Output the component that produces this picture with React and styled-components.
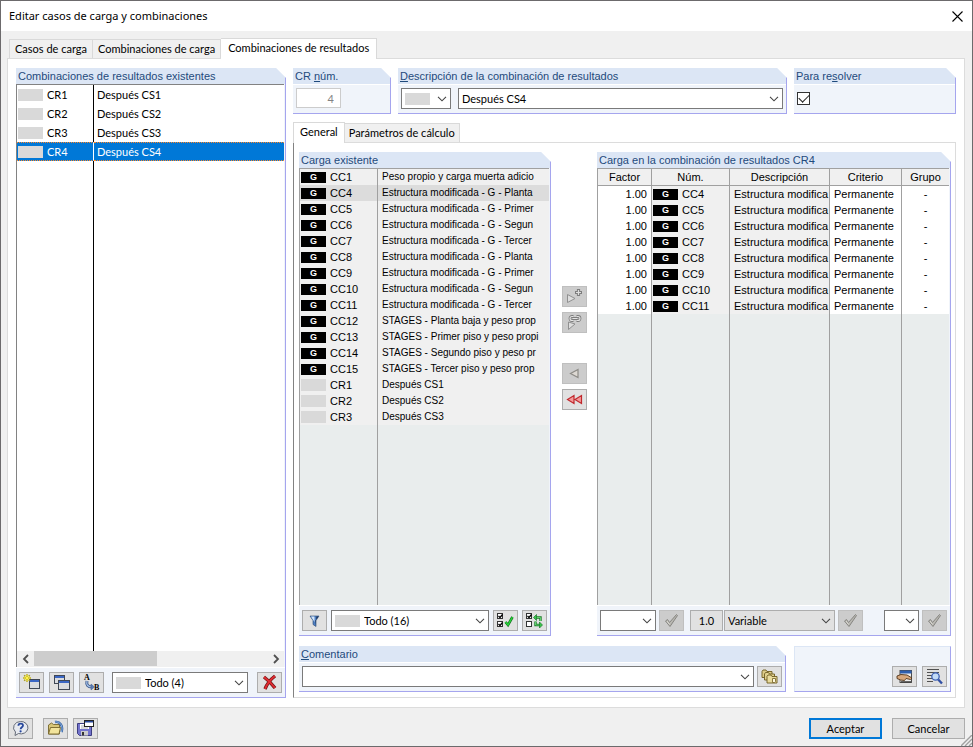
import React from 'react';
import styled, { createGlobalStyle, css } from 'styled-components';

const App = () => {
  return (
    <>
      <GlobalStyle />
      <StWindow>
        <StTitleBar>
          <StTitle>Editar casos de carga y combinaciones</StTitle>
          <StClose type='button' aria-label='Cerrar'>
            <svg width='11' height='11' viewBox='0 0 11 11'>
              <path d='M.5.5l10 10M10.5.5l-10 10' stroke='#000' strokeWidth='1.1' />
            </svg>
          </StClose>
        </StTitleBar>

        <StTabs>
          <StTab type='button'>Casos de carga</StTab>
          <StTab type='button'>Combinaciones de carga</StTab>
          <StTab type='button' $active>
            Combinaciones de resultados
          </StTab>
        </StTabs>

        <StPage>
          <ResultCombinations />
          <StDetail>
            <StTopRow>
              <StGroup>
                <StLabel htmlFor='number'>
                  CR <u>n</u>úm.
                </StLabel>
                <StFields>
                  <StNumber id='number' defaultValue='4' disabled />
                </StFields>
              </StGroup>
              <StGroup>
                <StLabel htmlFor='description'>
                  <u>D</u>escripción de la combinación de resultados
                </StLabel>
                <StFields $gap='7px'>
                  <Combo width='50px' swatch label='Color' />
                  <Combo id='description' value='Después CS4' />
                </StFields>
              </StGroup>
              <StGroup>
                <StLabel htmlFor='solve'>
                  Para re<u>s</u>olver
                </StLabel>
                <StFields>
                  <StCheckbox id='solve' type='checkbox' defaultChecked />
                </StFields>
              </StGroup>
            </StTopRow>

            <StInnerTabs>
              <StTab type='button' $active>
                General
              </StTab>
              <StTab type='button'>Parámetros de cálculo</StTab>
            </StInnerTabs>

            <StInnerPage>
              <StTransfer>
                <ExistingLoads />
                <StMoveButtons>
                  <ToolButton icon='add' label='Añadir' disabled />
                  <ToolButton icon='addGroup' label='Añadir con grupo' disabled />
                  <StSpacer />
                  <ToolButton icon='remove' label='Quitar' disabled />
                  <ToolButton icon='removeAll' label='Quitar todo' />
                </StMoveButtons>
                <CombinationLoads />
              </StTransfer>

              <StBottomRow>
                <StGroup>
                  <StLabel htmlFor='comment'>
                    <u>C</u>omentario
                  </StLabel>
                  <StFields>
                    <Combo id='comment' />
                    <ToolButton icon='library' label='Comentarios' />
                  </StFields>
                </StGroup>
                <StActions>
                  <ToolButton icon='hand' label='Seleccionar' />
                  <ToolButton icon='search' label='Detalles' />
                </StActions>
              </StBottomRow>
            </StInnerPage>
          </StDetail>
        </StPage>

        <StFooter>
          <ToolButton icon='help' label='Ayuda' />
          <StGap />
          <ToolButton icon='open' label='Abrir' />
          <ToolButton icon='save' label='Guardar' />
          <StPush />
          <StButton type='button' $primary>
            Aceptar
          </StButton>
          <StButton type='button'>Cancelar</StButton>
          <StGrip width='11' height='11' viewBox='0 0 11 11'>
            <path d='M0 11L11 0M4 11l7-7M8 11l3-3' stroke='#a0a0a0' strokeWidth='1.4' />
          </StGrip>
        </StFooter>
      </StWindow>
    </>
  );
};

export default App;

const RESULTS = ['Después CS1', 'Después CS2', 'Después CS3', 'Después CS4'];

const LOADS = [
  ['CC1', 'Peso propio y carga muerta adicio'],
  ['CC4', 'Estructura modificada - G - Planta'],
  ['CC5', 'Estructura modificada - G - Primer'],
  ['CC6', 'Estructura modificada - G - Segun'],
  ['CC7', 'Estructura modificada - G - Tercer'],
  ['CC8', 'Estructura modificada - G - Planta'],
  ['CC9', 'Estructura modificada - G - Primer'],
  ['CC10', 'Estructura modificada - G - Segun'],
  ['CC11', 'Estructura modificada - G - Tercer'],
  ['CC12', 'STAGES - Planta baja y peso prop'],
  ['CC13', 'STAGES - Primer piso y peso propi'],
  ['CC14', 'STAGES - Segundo piso y peso pr'],
  ['CC15', 'STAGES - Tercer piso y peso prop'],
  ['CR1', 'Después CS1'],
  ['CR2', 'Después CS2'],
  ['CR3', 'Después CS3'],
];

const COMBINED = ['CC4', 'CC5', 'CC6', 'CC7', 'CC8', 'CC9', 'CC10', 'CC11'];

const ResultCombinations = () => (
  <StGroup>
    <StHeading>Combinaciones de resultados existentes</StHeading>
    <StList>
      <StResultTable>
        <colgroup>
          <StCol $width='77px' />
          <StCol />
        </colgroup>
        <tbody>
          {RESULTS.map((name, i) => (
            <StResultRow key={name} $selected={i === 3}>
              <td>
                <StCode>
                  <StSwatch />
                  CR{i + 1}
                </StCode>
              </td>
              <td>{name}</td>
            </StResultRow>
          ))}
          <StFiller>
            <td />
            <td />
          </StFiller>
        </tbody>
      </StResultTable>
    </StList>
    <StScrollbar>
      <Arrow d='M6 1L2 5l4 4' />
      <StTrack>
        <StThumb />
      </StTrack>
      <Arrow d='M2 1l4 4-4 4' />
    </StScrollbar>
    <StToolbar $gap='5px'>
      <ToolButton icon='new' label='Nuevo' />
      <ToolButton icon='copy' label='Copiar' />
      <ToolButton icon='renumber' label='Renumerar' />
      <StFilter>
        <Combo value='Todo (4)' swatch label='Filtro' />
      </StFilter>
      <ToolButton icon='delete' label='Eliminar' />
    </StToolbar>
  </StGroup>
);

const ExistingLoads = () => (
  <StGroup>
    <StHeading>Carga existente</StHeading>
    <StGrid>
      <StLoadTable>
        <colgroup>
          <StCol $width='78px' />
          <StCol />
        </colgroup>
        <tbody>
          {LOADS.map(([code, name], i) => (
            <StLoadRow key={code} $selected={i === 1}>
              <td>
                <StCode>
                  {code.startsWith('CC') ? <StBadge>G</StBadge> : <StSwatch />}
                  {code}
                </StCode>
              </td>
              <StNameCell>{name}</StNameCell>
            </StLoadRow>
          ))}
          <StFiller>
            <td />
            <td />
          </StFiller>
        </tbody>
      </StLoadTable>
    </StGrid>
    <StToolbar $gap='4px'>
      <ToolButton icon='filter' label='Filtrar' />
      <Combo value='Todo (16)' swatch label='Tipo de carga' />
      <ToolButton icon='checkAll' label='Seleccionar todo' />
      <ToolButton icon='invert' label='Invertir selección' />
    </StToolbar>
  </StGroup>
);

const CombinationLoads = () => (
  <StGroup>
    <StHeading>Carga en la combinación de resultados CR4</StHeading>
    <StGrid>
      <StLoadTable>
        <colgroup>
          <StCol $width='54px' />
          <StCol $width='78px' />
          <StCol />
          <StCol $width='72px' />
          <StCol $width='47px' />
        </colgroup>
        <thead>
          <tr>
            <th>Factor</th>
            <th>Núm.</th>
            <th>Descripción</th>
            <th>Criterio</th>
            <th>Grupo</th>
          </tr>
        </thead>
        <tbody>
          {COMBINED.map((code) => (
            <StLoadRow key={code}>
              <StEditCell $align='right'>1.00</StEditCell>
              <td>
                <StCode>
                  <StBadge>G</StBadge>
                  {code}
                </StCode>
              </td>
              <td>Estructura modifica</td>
              <StEditCell>Permanente</StEditCell>
              <StEditCell $align='center'>-</StEditCell>
            </StLoadRow>
          ))}
          <StFiller>
            <td />
            <td />
            <td />
            <td />
            <td />
          </StFiller>
        </tbody>
      </StLoadTable>
    </StGrid>
    <StToolbar $gap='3px'>
      <Combo width='56px' label='Factor' />
      <ToolButton icon='apply' label='Aplicar factor' disabled />
      <StGap />
      <StPair>
        <StFactor type='button'>1.0</StFactor>
        <Combo value='Variable' flat label='Criterio' />
      </StPair>
      <ToolButton icon='apply' label='Aplicar criterio' disabled />
      <StGap $width='15px' />
      <Combo width='35px' label='Grupo' />
      <ToolButton icon='apply' label='Aplicar grupo' disabled />
    </StToolbar>
  </StGroup>
);

const Combo = ({ id, label, value = '', width, swatch, flat }) => (
  <StCombo $width={width} $flat={flat}>
    {swatch && <StSwatch />}
    <StSelect id={id} aria-label={label} $indent={swatch}>
      <option>{value}</option>
    </StSelect>
    <StChevron width='10' height='6' viewBox='0 0 10 6'>
      <path d='M1 .8l4 4 4-4' fill='none' stroke='#444' strokeWidth='1.1' />
    </StChevron>
  </StCombo>
);

const Arrow = ({ d }) => (
  <StArrow type='button' aria-label='Desplazar'>
    <svg width='8' height='10' viewBox='0 0 8 10'>
      <path d={d} fill='none' stroke='#505050' strokeWidth='1.8' />
    </svg>
  </StArrow>
);

const ToolButton = ({ icon, label, disabled }) => (
  <StToolButton type='button' aria-label={label} disabled={disabled}>
    <svg width='17' height='17' viewBox='0 0 17 17'>
      {icons[icon]}
    </svg>
  </StToolButton>
);

const smallWindow = (x, y, w, h) => (
  <g>
    <rect x={x + 0.5} y={y + 0.5} width={w} height={h} fill='#d9dbdf' stroke='#3f4754' />
    <rect x={x + 1} y={y + 1} width={w - 1} height='2' fill='#3a66c4' />
  </g>
);

const tinyCheck = (y, ticked) => (
  <g>
    <rect x='.5' y={y + 0.5} width='5' height='5' fill='#fff' stroke='#333' />
    {ticked && <path d={`M1.5 ${y + 3}l1.5 1.5 2.5-3`} fill='none' stroke='#000' strokeWidth='1.3' />}
  </g>
);

const icons = {
  new: (
    <>
      {smallWindow(6, 5, 10, 9)}
      <path d='M4 0v8M0 4h8M1.2 1.2l5.6 5.6M6.8 1.2L1.2 6.8' stroke='#a99a1c' strokeWidth='1.4' />
      <path d='M4 .5v7M.5 4h7M2 2l4 4M6 2L2 6' stroke='#fff34a' strokeWidth='1' />
    </>
  ),
  copy: (
    <>
      {smallWindow(1, 1, 10, 8)}
      {smallWindow(5, 6, 11, 9)}
    </>
  ),
  renumber: (
    <>
      <path d='M4 7c-1 4 1 6 5 6' fill='none' stroke='#3c5a8c' strokeWidth='3' />
      <path d='M4 7c-1 4 1 6 5 6' fill='none' stroke='#a9c4ea' strokeWidth='1.2' />
      <path d='M8 10l3.5 3L8 16z' fill='#5c7fb8' stroke='#3c5a8c' strokeWidth='.5' />
      <text x='1' y='6' fontSize='8' fontWeight='700' fontFamily='Liberation Serif, serif'>
        A
      </text>
      <text x='11' y='16' fontSize='8' fontWeight='700' fontFamily='Liberation Serif, serif'>
        B
      </text>
    </>
  ),
  delete: (
    <>
      <path d='M3 3c4 3 8 7 11 11M14 2C10 5 6 10 4 15' fill='none' stroke='#6d1515' strokeWidth='3.4' />
      <path d='M3 3c4 3 8 7 11 11M14 2C10 5 6 10 4 15' fill='none' stroke='#e02b30' strokeWidth='2' />
    </>
  ),
  add: (
    <>
      <path d='M1.5 6.5l7.500 4-7.500 4z' fill='#dedede' stroke='#909090' />
      <path d='M12.500 1v7M9 4.500h7' stroke='#7d7d7d' strokeWidth='3.2' />
      <path d='M12.500 2v5M10 4.500h5' stroke='#ddd' strokeWidth='1.2' />
    </>
  ),
  addGroup: (
    <>
      <path d='M2.5 8l6.500 2-6.500 5.500z' fill='#dedede' stroke='#909090' />
      <path d='M7.500 2.500H6a2 2 0 000 4h1.500M10.500 2.500H12a2 2 0 010 4h-1.500M6.500 4.500h5' fill='none' stroke='#7d7d7d' strokeWidth='2.8' />
      <path d='M7.500 2.500H6a2 2 0 000 4h1.500M10.500 2.500H12a2 2 0 010 4h-1.500M6.500 4.500h5' fill='none' stroke='#e4e4e4' strokeWidth='1.1' />
    </>
  ),
  remove: <path d='M12 4.500v8L4.500 8.500z' fill='#ddd9d3' stroke='#8d8b86' strokeWidth='1.2' />,
  removeAll: <path d='M8 4.500v8L1.500 8.500zM15.500 4.500v8L9 8.500z' fill='#f59a9a' stroke='#c0282d' strokeWidth='1.2' />,
  filter: (
    <>
      <path d='M4 4h9L10 8.500v6l-3-2v-4z' fill='#4f80c4' stroke='#29466f' strokeWidth='.6' />
      <path d='M5 4.500h3.500V10z' fill='#d4e6fb' />
      <path d='M10.500 4.500h2l-3 4v5z' fill='#16294a' />
    </>
  ),
  checkAll: (
    <>
      {tinyCheck(1, true)}
      {tinyCheck(9, true)}
      <path d='M8.500 10l2.500 3 4.500-8' fill='none' stroke='#14651c' strokeWidth='2.6' />
      <path d='M8.500 10l2.500 3 4.500-8' fill='none' stroke='#27d43a' strokeWidth='1.5' />
    </>
  ),
  invert: (
    <>
      {tinyCheck(1, true)}
      {tinyCheck(9, false)}
      <path d='M10 5.500h4.500V9M14 13H9.500V9.500' fill='none' stroke='#1d7a2a' strokeWidth='2.4' />
      <path d='M10 5.500h4.500V9M14 13H9.500V9.500' fill='none' stroke='#5fd06d' strokeWidth='1' />
      <path d='M10.500 2.500v6l-3-3zM13.500 10v6l3-3z' fill='#39c44c' stroke='#1d7a2a' strokeWidth='.7' />
    </>
  ),
  apply: (
    <>
      <path d='M2.500 9l2-1.500 2 3L13.500 2.500l1 1L7 14.500z' fill='#b9b8b2' stroke='#868581' strokeWidth='1' />
      <path d='M4 9l2.500 3.500' stroke='#dddcd6' />
    </>
  ),
  library: (
    <>
      <path d='M1 3.500l1-1.500h3l1 1.500h5v6H1z' fill='#dcca87' stroke='#6e5b20' strokeWidth='.9' />
      <path d='M3.500 6l1-1.500h3l1 1.500h5v6h-10z' fill='#e2d290' stroke='#6e5b20' strokeWidth='.9' />
      <path d='M6 8.500L7 7h3l1 1.500h5v6.500H6z' fill='#eadc9e' stroke='#6e5b20' strokeWidth='.9' />
      <path d='M11.500 10.500h3v3l-1 1h-2z' fill='#fffbe0' stroke='#6e5b20' strokeWidth='.8' />
    </>
  ),
  hand: (
    <>
      <rect x='4' y='2.500' width='11.500' height='12' fill='#ededed' stroke='#3b3b3b' strokeWidth='.9' />
      <rect x='4' y='2.500' width='11.500' height='3' fill='#2e5fae' />
      <path d='M1 8l4-1.500 6 .5 5 3-1.500 1.500-4.500-1-1.500 2-4-.5-3.500-1.500z' fill='#d6a77c' stroke='#513419' strokeWidth='.9' />
      <path d='M5 14h10' stroke='#444' strokeWidth='1.6' />
    </>
  ),
  search: (
    <>
      <path d='M1 1.500h12M1 4.500h12M1 7.500h5M1 10.500h5M1 13.500h6' stroke='#505050' strokeWidth='1.1' />
      <circle cx='9.500' cy='8.500' r='3.700' fill='#c4dcf7' stroke='#3f62b5' strokeWidth='1.3' />
      <path d='M12.200 11.500l3.800 4' stroke='#3150a6' strokeWidth='2.4' />
    </>
  ),
  help: (
    <>
      <path d='M8.500 1.500a7 6.200 0 11-2 12L3 15.500l.5-3.500A7 6.200 0 018.500 1.500z' fill='#e7eaf0' stroke='#666c78' />
      <path d='M6.400 5.800c0-3 4.600-2.800 4.600-.3 0 1.800-2.400 1.800-2.400 3.700' fill='none' stroke='#27479c' strokeWidth='1.8' />
      <circle cx='8.600' cy='11.300' r='1.100' fill='#27479c' />
    </>
  ),
  open: (
    <>
      <path d='M1.500 5l3-2 2 1.500h6V14h-11z' fill='#d8c678' stroke='#75652a' strokeWidth='.9' />
      <path d='M8 2c5-1 8.500 4 6.500 10' fill='none' stroke='#2e5b9c' strokeWidth='2.4' />
      <path d='M8 2c5-1 8.500 4 6.500 10' fill='none' stroke='#9fc3ef' strokeWidth='.9' />
      <path d='M1.500 14l2-6.500h10L12 14z' fill='#f2e49c' stroke='#75652a' strokeWidth='.9' />
    </>
  ),
  save: (
    <>
      <path d='M.5 3.500h14v12h-12l-2-2z' fill='#7474cc' stroke='#3c3c80' />
      <rect x='3' y='4' width='9' height='5' fill='#fff' />
      <path d='M4 6h7M4 8h7' stroke='#999' strokeWidth='.8' />
      <rect x='4' y='11' width='7' height='4.500' fill='#ccc' />
      <rect x='5' y='12' width='2' height='3.500' fill='#333' />
      <rect x='7.500' y='.5' width='9' height='6' fill='#fff' stroke='#222' />
      <rect x='8' y='1' width='8' height='1.500' fill='#26479a' />
    </>
  ),
};

const uiFont = "Lato, 'Noto Sans', sans-serif";
const gridFont = "'Liberation Sans', Arial, sans-serif";

const GlobalStyle = createGlobalStyle`
  * {
    box-sizing: border-box;
  }

  body {
    margin: 0;
  }

  button,
  input,
  select {
    margin: 0;
    font: inherit;
    color: inherit;
  }
`;

const StWindow = styled.main`
  display: flex;
  flex-direction: column;

  height: 100vh;
  min-height: 700px;

  border: 1px solid #6c6a6c;
  background-color: #f0f0f0;

  font-family: ${uiFont};
  font-size: 11px;
  line-height: 16px;
  color: #000;
`;

const StTitleBar = styled.header`
  display: flex;
  justify-content: space-between;
  align-items: center;

  height: 30px;
  padding: 0 9px 0 8px;

  background-color: #fff;
`;

const StTitle = styled.h1`
  margin: 0;

  font-family: 'Noto Sans', sans-serif;
  font-size: 11px;
  font-weight: 400;
`;

const StClose = styled.button`
  display: flex;
  padding: 0;

  border: 0;
  background: none;
`;

const StTab = styled.button`
  height: 19px;
  margin-bottom: 1px;
  padding: 0 5px;

  border: 1px solid #d9d9d9;
  border-width: 1px 1px 0 0;
  background-color: #f0f0f0;

  white-space: nowrap;

  &:first-child {
    border-left-width: 1px;
  }

  ${({ $active }) =>
    $active &&
    css`
      height: 21px;
      margin-bottom: 0;
      padding: 0 7px 2px;

      background-color: #fff;
    `}
`;

const StTabs = styled.nav`
  position: relative;
  z-index: 1;
  display: flex;
  align-items: flex-end;

  height: 28px;
  margin-bottom: -1px;
  padding-left: 8px;
`;

const StInnerTabs = styled(StTabs)`
  height: 29px;
  padding-left: 0;

  ${StTab} {
    padding-left: 4px;
    padding-right: 4px;
  }

  ${StTab}:first-child {
    padding-left: 6px;
    padding-right: 6px;
  }
`;

const StPage = styled.section`
  flex: 1;
  display: grid;
  grid-template-columns: 270px minmax(0, 1fr);
  gap: 7px;

  min-height: 0;
  margin: 0 7px 0 6px;
  padding: 9px 8px 9px;

  border: 1px solid #dcdcdc;
  background-color: #fff;
`;

const StDetail = styled.div`
  display: flex;
  flex-direction: column;

  min-height: 0;
`;

const StGroup = styled.section`
  display: flex;
  flex-direction: column;

  min-width: 0;
  min-height: 0;

  border: 1px solid #a5a5ee;
  border-width: 0 1px 1px 0;
  background-color: #f0f4fa;

  clip-path: polygon(0 0, calc(100% - 10px) 0, 100% 10px, 100% 100%, 0 100%);
`;

const headingStyle = css`
  height: 16px;
  margin: 0;
  padding-left: 2px;

  background-color: #dce6f5;

  font-family: ${gridFont};
  font-size: 11px;
  font-weight: 400;
  line-height: 16px;
  white-space: nowrap;

  color: #1f4a7c;
`;

const StHeading = styled.h2`
  ${headingStyle}
`;

const StLabel = styled.label`
  ${headingStyle}
`;

const StFields = styled.div`
  display: flex;
  gap: ${({ $gap }) => $gap || '3px'};

  padding: 3px;

  border-top: 1px solid #fff;
`;

const StTopRow = styled.div`
  display: grid;
  grid-template-columns: 98px minmax(0, 1fr) 162px;
  gap: 7px;

  height: 46px;
`;

const StNumber = styled.input`
  width: 45px;
  height: 20px;
  padding: 0 6px;

  border: 1px solid #cccccc;
  background-color: #fff;

  text-align: right;

  color: #838383;
`;

const StCheckbox = styled.input`
  appearance: none;
  width: 13px;
  height: 13px;
  margin-top: 4px;

  border: 1px solid #333;
  background-color: #fff;

  &:checked::after {
    content: '';
    display: block;
    width: 9px;
    height: 5px;
    margin: 1px;

    border: solid #222;
    border-width: 0 0 1px 1px;

    transform: rotate(-45deg);
  }
`;

const StCombo = styled.span`
  position: relative;
  display: flex;
  align-items: center;
  flex: ${({ $width }) => ($width ? `0 0 ${$width}` : '1')};

  height: 21px;
  padding-left: 3px;

  border: 1px solid ${({ $flat }) => ($flat ? '#adadad' : '#7a7a7a')};
  background-color: ${({ $flat }) => ($flat ? '#e1e1e1' : '#fff')};
`;

const StSelect = styled.select`
  appearance: none;
  flex: 1;
  min-width: 0;
  height: 19px;
  padding: 0 16px 0 ${({ $indent }) => ($indent ? '4px' : '0')};

  border: 0;
  outline: 0;
  background: none;
`;

const StChevron = styled.svg`
  position: absolute;
  right: 3px;
  top: 7px;
  pointer-events: none;
`;

const StSwatch = styled.i`
  flex: none;
  width: 25px;
  height: 12px;

  background-color: #d9d9d9;
`;

const StBadge = styled.b`
  flex: none;
  width: 25px;
  height: 11px;

  background-color: #000;

  font-size: 9px;
  line-height: 11px;
  text-align: center;

  color: #fff;
`;

const StCode = styled.span`
  display: flex;
  align-items: center;
  gap: 4px;
`;

const StList = styled.div`
  flex: 1;

  min-height: 0;
  margin-right: 1px;

  border: 1px solid #828282;
  border-width: 1px 0 0 1px;
  background-color: #fff;
`;

const StTable = styled.table`
  table-layout: fixed;
  width: 100%;
  height: 100%;

  border-collapse: separate;
  border-spacing: 0;

  td {
    overflow: hidden;
    padding: 0;

    white-space: nowrap;
  }
`;

const StCol = styled.col`
  width: ${({ $width }) => $width || 'auto'};
`;

const StResultTable = styled(StTable)`
  td {
    padding-left: 3px;
  }

  td:first-child {
    padding-left: 1px;
    border-right: 1px solid #000;
  }
`;

const StResultRow = styled.tr`
  height: 19px;

  ${({ $selected }) =>
    $selected &&
    css`
      background-color: #0078d7;
      color: #fff;

      td {
        border: 1px dotted #ff8728;
        border-width: 1px 0;
      }

      td:first-child {
        border-right: 1px solid #fff;
      }
    `}
`;

const StFiller = styled.tr`
  height: auto;
`;

const StScrollbar = styled.div`
  display: flex;

  height: 16px;
  margin-right: 1px;
  padding-bottom: 1px;

  border-left: 1px solid #828282;
  background-color: #f0f0f0;
`;

const StArrow = styled.button`
  display: flex;
  justify-content: center;
  align-items: center;

  width: 17px;
  padding: 0;

  border: 0;
  background: none;
`;

const StTrack = styled.div`
  flex: 1;
`;

const StThumb = styled.div`
  width: 53%;
  height: 100%;

  background-color: #cdcdcd;
`;

const StToolbar = styled.div`
  display: flex;
  align-items: center;
  gap: ${({ $gap }) => $gap};

  height: 30px;
  padding: 0 3px;

  border-top: 1px solid #fff;
`;

const StFilter = styled.span`
  flex: 1;
  display: flex;

  padding: 0 4px 0 3px;
`;

const StGap = styled.span`
  width: ${({ $width }) => $width || 0};
`;

const StToolButton = styled.button`
  flex: none;
  display: flex;
  justify-content: center;
  align-items: center;

  width: 25px;
  height: 21px;
  padding: 0;

  border: 1px solid #adadad;
  background-color: #e1e1e1;

  &:disabled {
    border-color: #bfbfbf;
    background-color: #cccccc;
  }
`;

const StInnerPage = styled.section`
  flex: 1;
  display: flex;
  flex-direction: column;
  gap: 10px;

  min-height: 0;
  padding: 9px 4px 5px 5px;

  border: 1px solid #dcdcdc;
  border-left-color: #828282;
  background-color: #fff;
`;

const StTransfer = styled.div`
  flex: 1;
  display: grid;
  grid-template-columns: 252fr 46px 354fr;

  min-height: 0;
`;

const StMoveButtons = styled.div`
  display: flex;
  flex-direction: column;
  align-items: center;
  gap: 5px;

  padding-top: 134px;
`;

const StSpacer = styled.span`
  height: 20px;
`;

const StGrid = styled.div`
  flex: 1;

  min-height: 0;
  margin-right: 1px;

  border: 1px solid #a0a0a0;
  border-width: 1px 0 0 1px;
  background-color: #e9eded;
`;

const StLoadTable = styled(StTable)`
  font-family: ${gridFont};
  font-size: 11px;
  line-height: 16px;

  th {
    height: 17px;
    padding: 0;

    border: 1px solid #a0a0a0;
    border-width: 0 1px 1px 0;
    background-color: #f0f0f0;

    font-weight: 400;
    line-height: 16px;
  }

  td {
    padding-left: 4px;

    border-right: 1px solid #a0a0a0;
  }

  th:last-child,
  td:last-child {
    border-right: 0;
  }

  ${StCode} {
    margin-left: -3px;
  }
`;

const StLoadRow = styled.tr`
  height: 16px;

  background-color: ${({ $selected }) => ($selected ? '#dcdcdc' : '#f0f0f0')};
`;

const StNameCell = styled.td`
  font-size: 10px;
`;

const StEditCell = styled.td`
  background-color: #fff;

  text-align: ${({ $align }) => $align || 'left'};

  ${StLoadTable} & {
    padding-right: 4px;
  }
`;

const StPair = styled.span`
  flex: 1;
  display: flex;
  gap: 1px;
`;

const StFactor = styled.button`
  width: 33px;
  height: 21px;
  padding: 0;

  border: 1px solid #adadad;
  background-color: #e1e1e1;
`;

const StBottomRow = styled.div`
  display: grid;
  grid-template-columns: minmax(0, 1fr) 157px;
  gap: 8px;

  height: 46px;
`;

const StActions = styled.div`
  display: flex;
  justify-content: flex-end;
  align-items: flex-end;
  gap: 5px;

  padding: 4px 3px;

  border: 1px solid #a5a5ee;
  border-top-color: #dce6f5;
  border-left-color: #dce6f5;
  background-color: #f0f4fa;
`;

const StFooter = styled.footer`
  position: relative;
  display: flex;
  gap: 5px;

  padding: 10px 7px 7px;
`;

const StPush = styled.span`
  flex: 1;
`;

const StButton = styled.button`
  width: 73px;
  height: 21px;
  margin-left: 5px;
  padding: 0;

  border: ${({ $primary }) => ($primary ? '2px solid #0078d7' : '1px solid #adadad')};
  background-color: #e1e1e1;
`;

const StGrip = styled.svg`
  position: absolute;
  right: 0;
  bottom: 0;
`;
